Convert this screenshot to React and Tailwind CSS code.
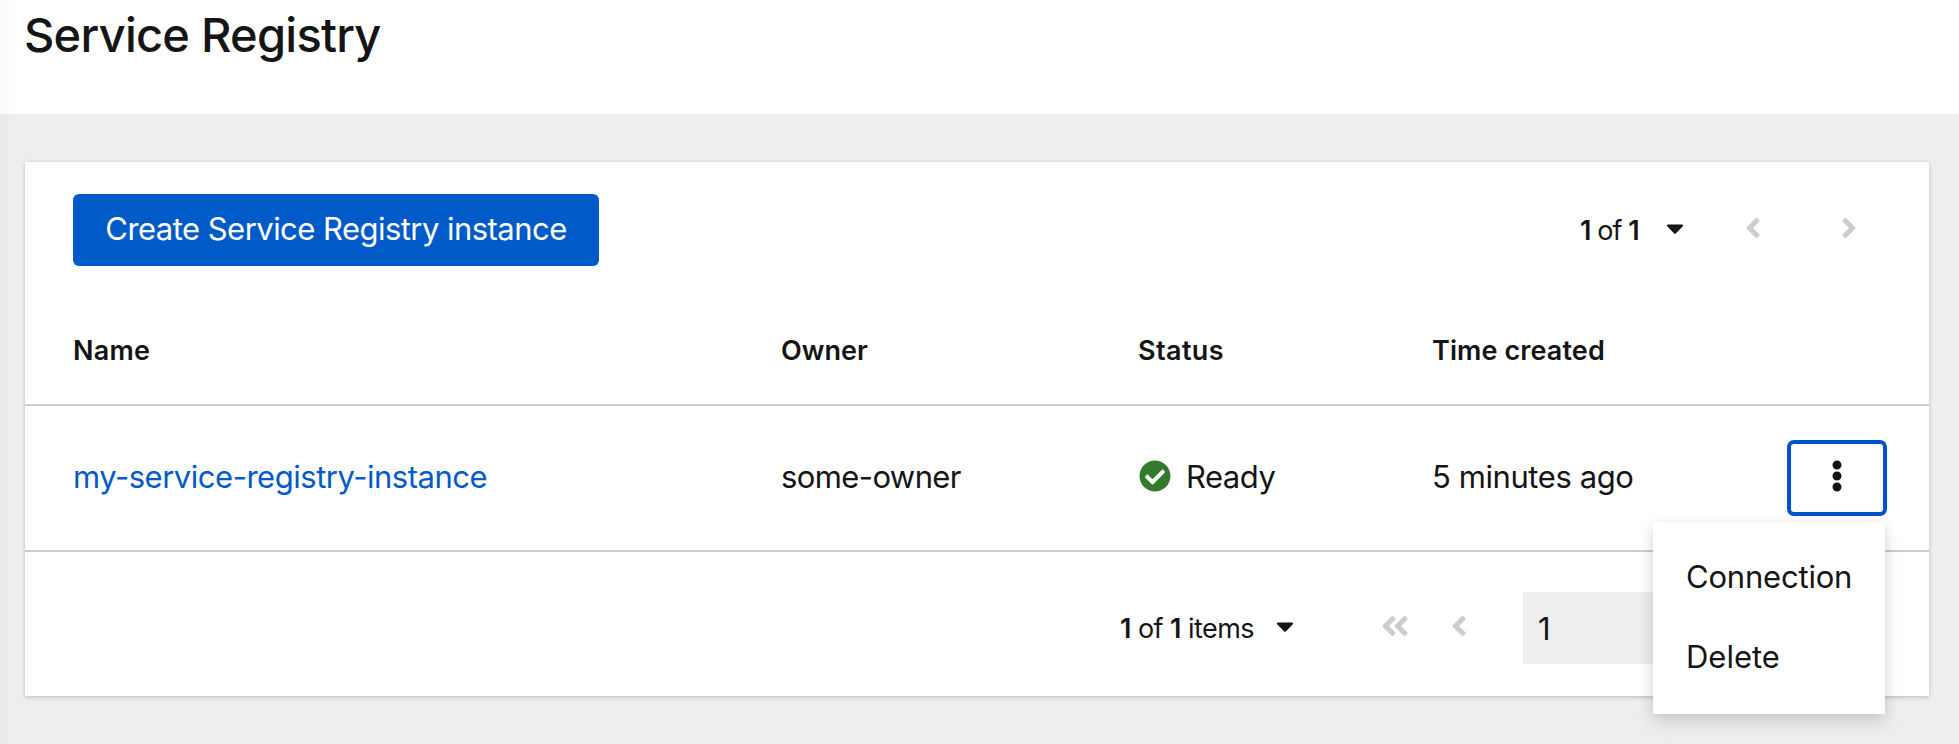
import React from "react";
import {
  FaAngleDoubleLeft,
  FaAngleLeft,
  FaAngleRight,
  FaCaretDown,
  FaCheckCircle,
  FaEllipsisV,
} from "react-icons/fa";

const GRID = "grid grid-cols-[708px_357px_294px_1fr_auto] pl-12 items-center";

function Header() {
  return (
    <header className="h-[114px] bg-white pl-6">
      <h1 className="text-[47px] leading-[70px] font-medium tracking-[-0.75px]">Service Registry</h1>
    </header>
  );
}

function Toolbar() {
  return (
    <div className="flex h-[136px] items-start justify-between pt-8 pl-12">
      <button className="flex h-[72px] w-[526px] items-center justify-center rounded-[6px] bg-[#005bc8] pb-0.5 text-[31px] text-white">
        <span className="tracking-[-0.54px] whitespace-nowrap">Create Service Registry instance</span>
      </button>
      <div className="flex h-[72px] items-center pr-16">
        <span className="w-[81px] pt-[3px] text-[27px] tracking-[-0.9px] whitespace-nowrap">
          <b className="font-semibold">1</b> of <b className="font-semibold">1</b>
        </span>
        <FaCaretDown className="mb-[5px] size-7" />
        <FaAngleLeft className="mb-1 ml-[48px] size-8 text-[#cccccc]" />
        <FaAngleRight className="mb-1 ml-[64px] size-8 text-[#cccccc]" />
      </div>
    </div>
  );
}

function ActionsMenu() {
  return (
    <div className="relative mr-[42px]">
      <button className="flex h-[76px] w-[100px] items-center justify-center rounded-[7px] border-4 border-[#0052cc] pb-1">
        <FaEllipsisV className="size-8" />
      </button>
      <ul className="absolute top-[82px] right-[2px] z-10 h-[192px] w-[232px] bg-white pt-[15px] pl-[33px] text-[31px] shadow-[0_8px_16px_0_rgba(3,3,3,0.14),0_0_8px_0_rgba(3,3,3,0.06)]">
        <li className="flex h-20 items-center tracking-[-0.2px]">Connection</li>
        <li className="flex h-20 items-center">Delete</li>
      </ul>
    </div>
  );
}

function InstancesTable() {
  return (
    <div>
      <div className={`${GRID} h-[108px] border-b-2 border-[#cccccc] text-[27px] font-semibold`}>
        <span className="tracking-[0.2px]">Name</span>
        <span>Owner</span>
        <span className="tracking-[0.4px]">Status</span>
        <span className="tracking-[0.1px]">Time created</span>
      </div>
      <div className={`${GRID} h-[146px] border-b-2 border-[#cccccc] text-[31px]`}>
        <a className="pb-0.5 tracking-[-0.48px] text-[#005bc8]">my-service-registry-instance</a>
        <span className="pb-0.5 tracking-[-0.6px]">some-owner</span>
        <span className="flex items-center">
          <FaCheckCircle className="mr-[15px] mb-1 ml-px size-8 text-[#357a2c]" />
          <span className="pb-0.5 tracking-[-0.5px]">Ready</span>
        </span>
        <span className="pb-0.5 tracking-[-0.42px]">5 minutes ago</span>
        <ActionsMenu />
      </div>
    </div>
  );
}

function Footer() {
  return (
    <div className="flex h-[144px] items-center pt-2 pl-[1095px]">
      <span className="w-[151px] pt-0.5 text-[27px] tracking-[-0.55px] whitespace-nowrap">
        <b className="font-semibold">1</b> of <b className="font-semibold">1</b> items
      </span>
      <FaCaretDown className="mb-[5px] size-7" />
      <FaAngleDoubleLeft className="mb-1 ml-[80px] size-8 text-[#cccccc]" />
      <FaAngleLeft className="mb-1 ml-[32px] size-8 text-[#cccccc]" />
      <div className="ml-[48px] flex h-[72px] w-[200px] items-center bg-[#eeeeee] pt-0.5 pl-[15px] text-[31px]">1</div>
    </div>
  );
}

export default function App() {
  return (
    <div className="relative h-[744px] w-[1959px] overflow-hidden bg-[#eeeeee] font-['Inter',sans-serif] text-[#151515]">
      <Header />
      <main className="pt-12 pl-[25px]">
        <section className="h-[534px] w-[1904px] bg-white shadow-[0_2px_4px_0_rgba(3,3,3,0.14),0_0_4px_0_rgba(3,3,3,0.08)]">
          <Toolbar />
          <InstancesTable />
          <Footer />
        </section>
      </main>
      <div className="absolute inset-y-0 left-0 w-4 bg-gradient-to-r from-black/[0.02] to-transparent" />
    </div>
  );
}
